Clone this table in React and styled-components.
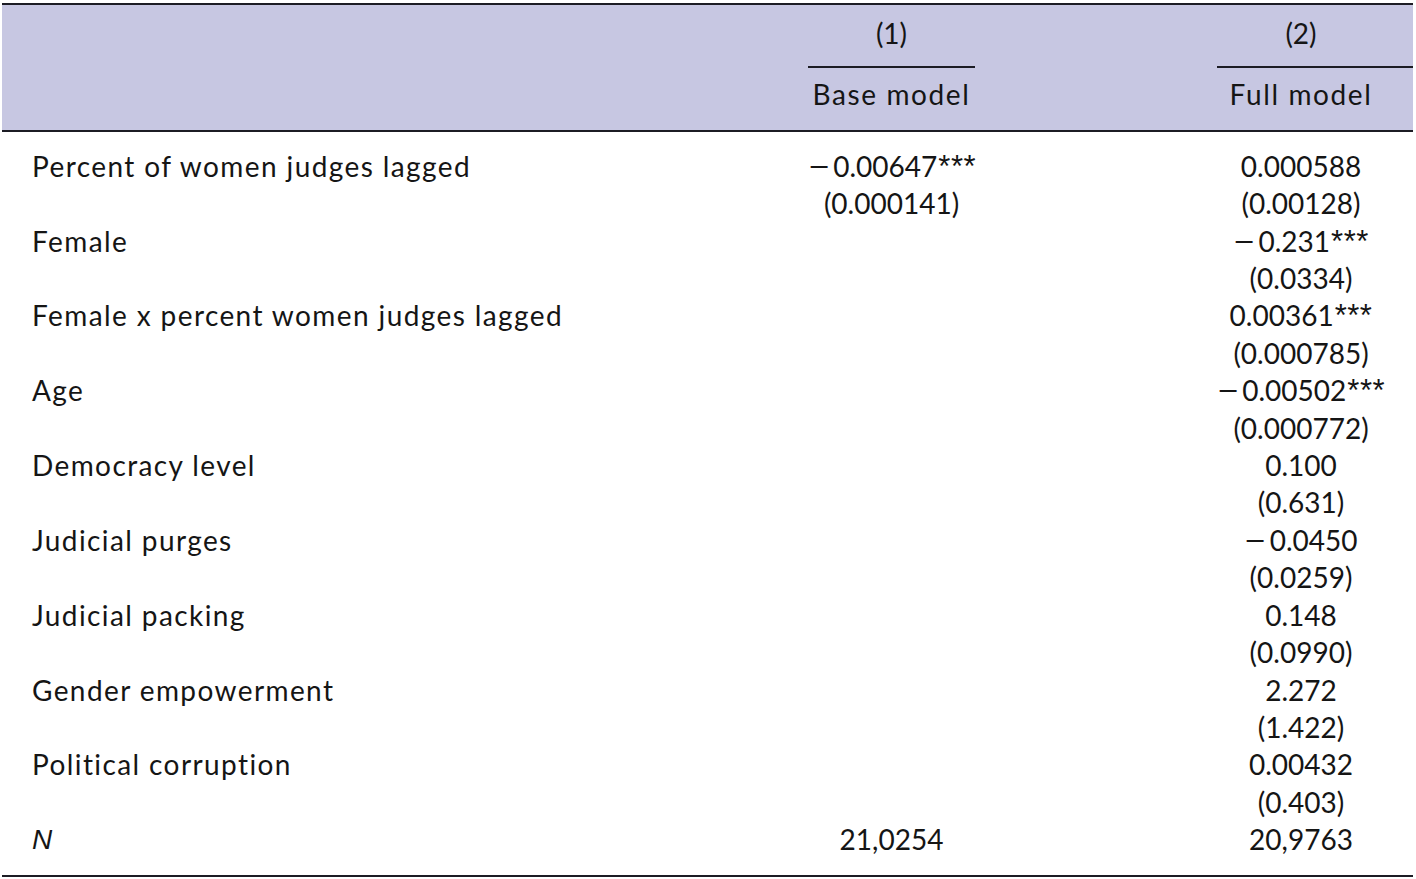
import styled, { createGlobalStyle } from "styled-components";

/* Styling */
const GlobalStyle = createGlobalStyle`
  html, body {
    margin: 0;
    padding: 0;
    background: #ffffff;
  }
  body {
    font-family: Lato, "Noto Sans", sans-serif;
    color: #151515;
  }
`;

const Page = styled.div`
  padding: 3px 0 0 2px;
  width: 1411px;
`;

const Grid = styled.div`
  display: grid;
  grid-template-columns: 806px 167px 242px 196px;
  font-size: 28px;
  line-height: 37.4px;
`;

const Head = styled.div`
  grid-column: 1 / -1;
  display: grid;
  grid-template-columns: subgrid;
  background: #c7c7e2;
  border-top: 2px solid #1c1c24;
  border-bottom: 2px solid #1c1c24;
  padding: 10px 0 16px;
`;

const HeadCell = styled.div`
  grid-column: ${(p) => p.$col};
  display: flex;
  flex-direction: column;
  text-align: center;
`;

const HeadText = styled.div`
  padding-right: ${(p) => (p.$trim ? "28px" : "0")};
  letter-spacing: ${(p) => (p.$word ? "1.6px" : "0")};
`;

const Rule = styled.div`
  height: 2px;
  background: #1c1c24;
  margin: 14px 0 8px;
`;

const Body = styled.div`
  grid-column: 1 / -1;
  display: grid;
  grid-template-columns: subgrid;
  padding: 16px 0 16px;
  border-bottom: 2px solid #1c1c24;
`;

const Label = styled.div`
  grid-column: 1;
  padding-left: 30px;
  letter-spacing: ${(p) => (p.$italic ? "0" : "1.4px")};
  font-style: ${(p) => (p.$italic ? "italic" : "normal")};
  font-family: ${(p) => (p.$italic ? '"Liberation Sans", Arial, sans-serif' : "inherit")};
`;

const Value = styled.div`
  grid-column: ${(p) => p.$col};
  display: flex;
  flex-direction: column;
  text-align: center;
  padding-right: ${(p) => (p.$trim ? "28px" : "0")};
  white-space: nowrap;
`;

const Minus = styled.span`
  display: inline-block;
  transform: scaleX(1.4);
  margin: 0 6px 0 3px;
`;

const Stars = styled.span`
  font-family: "Liberation Sans", Arial, sans-serif;
  font-size: 31px;
  line-height: 0;
  letter-spacing: 0.5px;
  margin-left: 1px;
`;
/* Styling End */

const rows = [
  { label: "Percent of women judges lagged", c1: ["-0.00647***", "(0.000141)"], c2: ["0.000588", "(0.00128)"] },
  { label: "Female", c2: ["-0.231***", "(0.0334)"] },
  { label: "Female x percent women judges lagged", c2: ["0.00361***", "(0.000785)"] },
  { label: "Age", c2: ["-0.00502***", "(0.000772)"] },
  { label: "Democracy level", c2: ["0.100", "(0.631)"] },
  { label: "Judicial purges", c2: ["-0.0450", "(0.0259)"] },
  { label: "Judicial packing", c2: ["0.148", "(0.0990)"] },
  { label: "Gender empowerment", c2: ["2.272", "(1.422)"] },
  { label: "Political corruption", c2: ["0.00432", "(0.403)"] },
];

function Num({ text }) {
  const neg = text.startsWith("-");
  let body = neg ? text.slice(1) : text;
  const star = body.indexOf("*");
  const stars = star >= 0 ? body.slice(star) : "";
  if (star >= 0) body = body.slice(0, star);
  return (
    <span>
      {neg && <Minus>{"\u2212"}</Minus>}
      {body}
      {stars && <Stars>{stars}</Stars>}
    </span>
  );
}

function Cell({ col, lines, trim }) {
  return (
    <Value $col={col} $trim={trim}>
      {(lines || []).map((l, i) => (
        <Num key={i} text={l} />
      ))}
    </Value>
  );
}

const App = () => {
  return (
    <Page>
      <GlobalStyle />
      <Grid>
        <Head>
          <HeadCell $col={2}>
            <HeadText>(1)</HeadText>
            <Rule />
            <HeadText $word>Base model</HeadText>
          </HeadCell>
          <HeadCell $col={4}>
            <HeadText $trim>(2)</HeadText>
            <Rule />
            <HeadText $trim $word>Full model</HeadText>
          </HeadCell>
        </Head>
        <Body>
          {rows.map((r) => (
            <>
              <Label key={r.label}>{r.label}</Label>
              <Cell col={2} lines={r.c1} />
              <Cell col={4} lines={r.c2} trim />
            </>
          ))}
          <Label $italic>N</Label>
          <Cell col={2} lines={["21,0254"]} />
          <Cell col={4} lines={["20,9763"]} trim />
        </Body>
      </Grid>
    </Page>
  );
};

export default App;
